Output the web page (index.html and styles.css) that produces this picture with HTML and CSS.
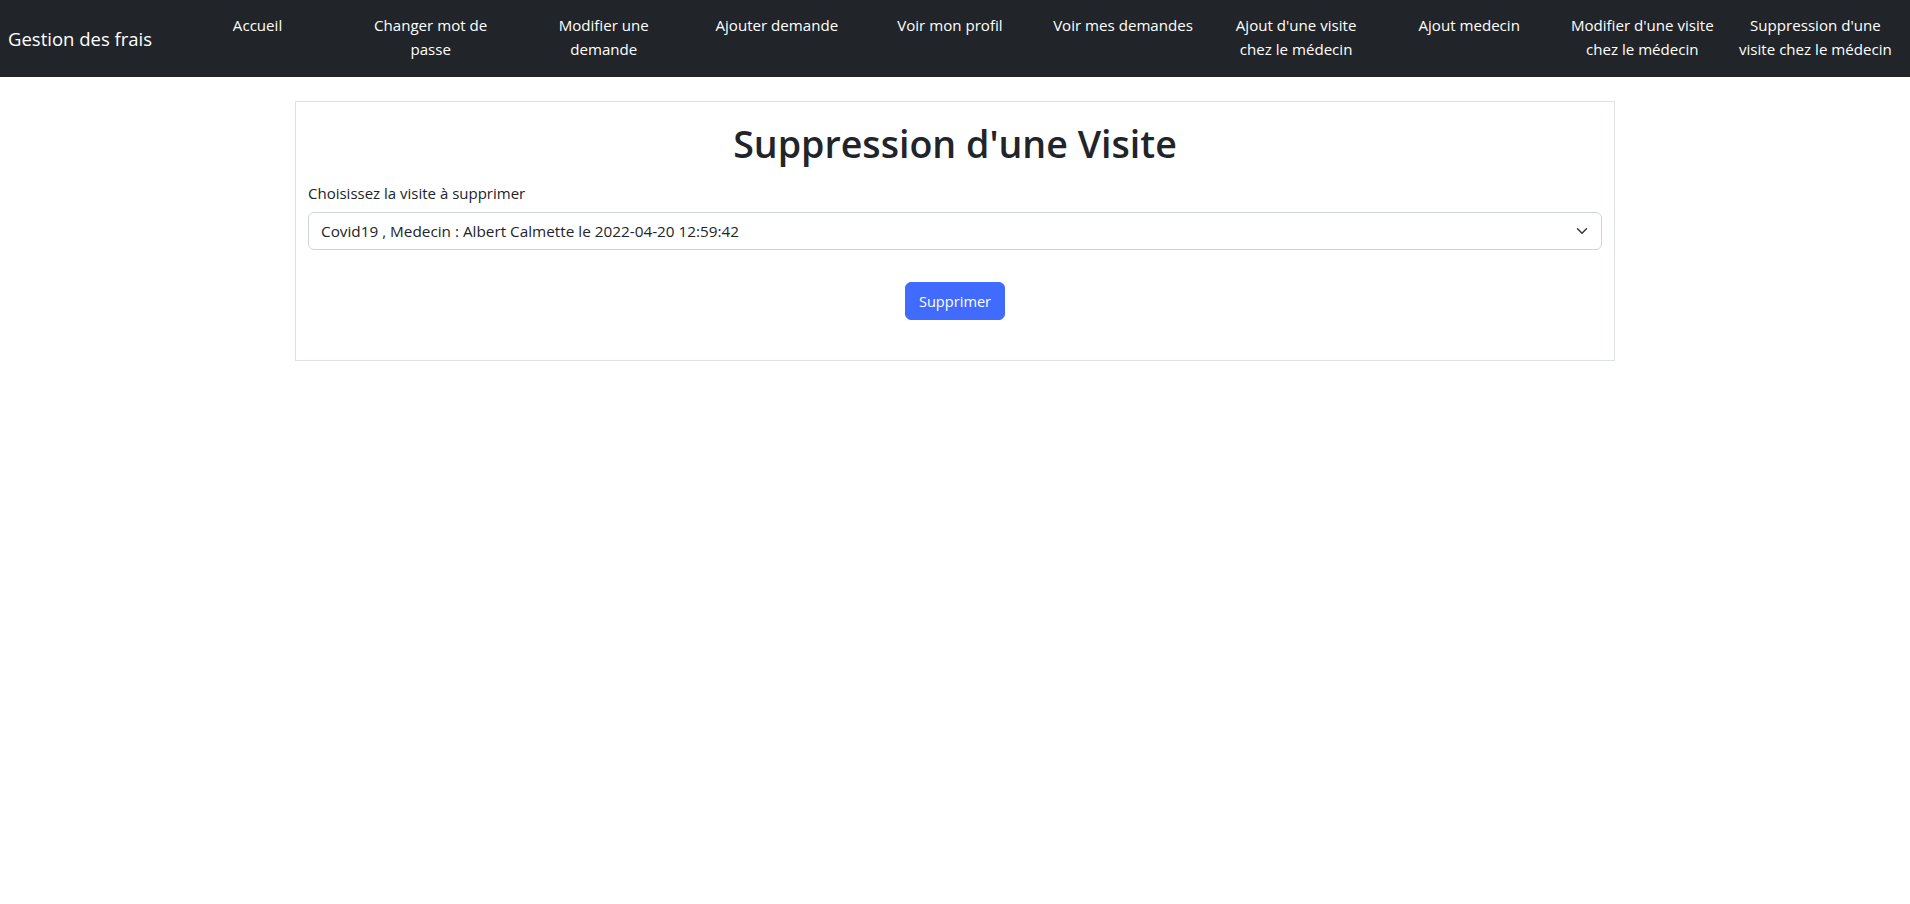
FILE: index.html
```html
<!DOCTYPE html>
<html lang="fr">
<head>
<meta charset="utf-8">
<title>Suppression d'une visite</title>
<link rel="stylesheet" href="styles.css">
</head>
<body>
<nav class="navbar">
  <a class="brand" href="#">Gestion des frais</a>
  <ul class="nav-list">
    <li><a href="#">Accueil</a></li>
    <li><a href="#">Changer mot de<br>passe</a></li>
    <li><a href="#">Modifier une<br>demande</a></li>
    <li><a href="#">Ajouter demande</a></li>
    <li><a href="#">Voir mon profil</a></li>
    <li><a href="#">Voir mes demandes</a></li>
    <li><a href="#">Ajout d'une visite<br>chez le médecin</a></li>
    <li><a href="#">Ajout medecin</a></li>
    <li><a href="#">Modifier d'une visite<br>chez le médecin</a></li>
    <li><a href="#">Suppression d'une<br>visite chez le médecin</a></li>
  </ul>
</nav>
<main class="card">
  <h1 class="title">Suppression d'une Visite</h1>
  <form class="form">
    <label class="label" for="visite">Choisissez la visite à supprimer</label>
    <div class="select-wrap">
      <select class="select" id="visite">
        <option>Covid19 , Medecin : Albert Calmette le 2022-04-20 12:59:42</option>
      </select>
      <svg class="chevron" width="16" height="12" viewBox="0 0 16 16"><path d="m2 5 6 6 6-6" fill="none" stroke="#343a40" stroke-width="2" stroke-linecap="round" stroke-linejoin="round"/></svg>
    </div>
    <div class="actions">
      <button type="button" class="btn">Supprimer</button>
    </div>
  </form>
</main>
</body>
</html>
```
FILE: styles.css
```css
* { box-sizing: border-box; }
html, body { margin: 0; padding: 0; }
body {
  font-family: "Open Sans", "Noto Sans", sans-serif;
  font-size: 15px;
  line-height: 24px;
  color: #212529;
  background: #fff;
}
.navbar {
  display: flex;
  align-items: flex-start;
  height: 77px;
  padding: 0 8px;
  background: #212529;
}
.brand {
  align-self: center;
  width: 147px;
  margin-right: 16px;
  color: #fff;
  font-size: 18.5px;
  line-height: 30px;
  text-decoration: none;
  white-space: nowrap;
}
.nav-list {
  display: flex;
  flex: 1;
  margin: 0;
  padding: 0;
  list-style: none;
}
.nav-list li {
  flex: 1 1 0;
  padding: 13px 4px 0;
  text-align: center;
  white-space: nowrap;
}
.nav-list a {
  color: #fff;
  text-decoration: none;
  font-size: 15.1px;
  line-height: 24px;
}
.card {
  width: 1320px;
  margin: 24px auto 0;
  padding: 0 12px 40px;
  border: 1px solid #dee2e6;
}
.title {
  margin: 18px 0 0;
  text-align: center;
  font-size: 37.6px;
  font-weight: 600;
  line-height: 48px;
  color: #212529;
}
.form { display: flex; flex-direction: column; }
.label {
  margin: 13px 0 7px;
  font-size: 15px;
}
.select-wrap { position: relative; }
.select {
  display: block;
  width: 100%;
  height: 38px;
  padding: 6px 36px 6px 12px;
  border: 1px solid #ced4da;
  border-radius: 6px;
  background: #fff;
  color: #212529;
  font-family: inherit;
  font-size: 15.3px;
  -webkit-appearance: none;
  appearance: none;
}
.chevron {
  position: absolute;
  right: 12px;
  top: 13px;
  pointer-events: none;
}
.actions {
  display: flex;
  justify-content: center;
  margin-top: 32px;
}
.btn {
  width: 100px;
  height: 38px;
  padding: 6px 12px;
  border: 1px solid #416bff;
  border-radius: 6px;
  background: #416bff;
  color: #fff;
  font-family: inherit;
  font-size: 14.6px;
  line-height: 24px;
}
```
